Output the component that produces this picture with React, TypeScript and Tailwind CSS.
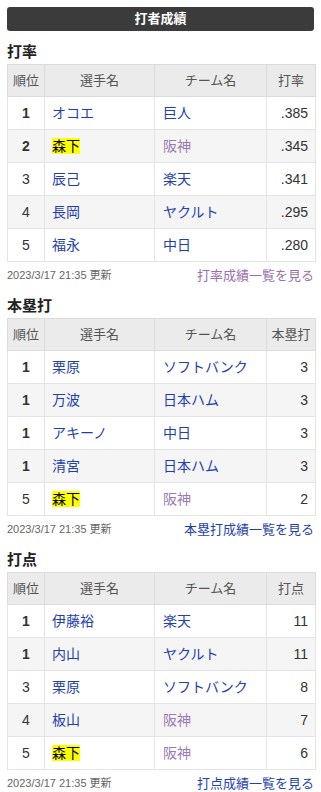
type Row = {
  rank: number;
  name: string;
  team: string;
  value: string;
  me?: boolean;
  visited?: boolean;
};

type Section = {
  title: string;
  link: string;
  linkVisited?: boolean;
  rows: Row[];
};

const sections: Section[] = [
  {
    title: "打率",
    link: "打率成績一覧を見る",
    linkVisited: true,
    rows: [
      { rank: 1, name: "オコエ", team: "巨人", value: ".385" },
      { rank: 2, name: "森下", team: "阪神", value: ".345", me: true, visited: true },
      { rank: 3, name: "辰己", team: "楽天", value: ".341" },
      { rank: 4, name: "長岡", team: "ヤクルト", value: ".295" },
      { rank: 5, name: "福永", team: "中日", value: ".280" },
    ],
  },
  {
    title: "本塁打",
    link: "本塁打成績一覧を見る",
    rows: [
      { rank: 1, name: "栗原", team: "ソフトバンク", value: "3" },
      { rank: 1, name: "万波", team: "日本ハム", value: "3" },
      { rank: 1, name: "アキーノ", team: "中日", value: "3" },
      { rank: 1, name: "清宮", team: "日本ハム", value: "3" },
      { rank: 5, name: "森下", team: "阪神", value: "2", me: true, visited: true },
    ],
  },
  {
    title: "打点",
    link: "打点成績一覧を見る",
    rows: [
      { rank: 1, name: "伊藤裕", team: "楽天", value: "11" },
      { rank: 1, name: "内山", team: "ヤクルト", value: "11" },
      { rank: 3, name: "栗原", team: "ソフトバンク", value: "8" },
      { rank: 4, name: "板山", team: "阪神", value: "7", visited: true },
      { rank: 5, name: "森下", team: "阪神", value: "6", me: true, visited: true },
    ],
  },
];

function StatTable({ section, first }: { section: Section; first: boolean }) {
  return (
    <div>
      <h2
        className={`${first ? "mt-[8px]" : "mt-[4px]"} h-[25px] leading-[25px] text-[15px] font-bold text-[#222]`}
      >
        {section.title}
      </h2>
      <table className="w-full table-fixed border-collapse border border-[#d6d6d6] text-[14px]">
        <colgroup>
          <col className="w-[37px]" />
          <col className="w-[110px]" />
          <col className="w-[112px]" />
          <col className="w-[49px]" />
        </colgroup>
        <thead>
          <tr className="h-[32px] bg-[#ebebeb] text-[13px] text-[#555]">
            <th className="border border-[#dcdcdc] font-normal">順位</th>
            <th className="border border-[#dcdcdc] font-normal">選手名</th>
            <th className="border border-[#dcdcdc] font-normal">チーム名</th>
            <th className="border border-[#dcdcdc] font-normal">{section.title}</th>
          </tr>
        </thead>
        <tbody>
          {section.rows.map((r, i) => (
            <tr key={i} className={`h-[33px] ${i % 2 === 1 ? "bg-[#f5f5f5]" : "bg-white"}`}>
              <td
                className={`border border-[#e4e4e4] text-center text-[#333] ${r.rank <= 2 ? "font-bold" : ""}`}
              >
                {r.rank}
              </td>
              <td className="border border-[#e4e4e4] pl-[7px]">
                {r.me ? (
                  <span className="bg-[#ffff00] text-black">{r.name}</span>
                ) : (
                  <span className="text-[#1f3fb0]">{r.name}</span>
                )}
              </td>
              <td
                className={`border border-[#e4e4e4] pl-[8px] ${r.visited ? "text-[#9a7bb0]" : "text-[#1f3fb0]"}`}
              >
                {r.team}
              </td>
              <td className="border border-[#e4e4e4] pr-[7px] text-right text-[#333]">{r.value}</td>
            </tr>
          ))}
        </tbody>
      </table>
      <div className="flex h-[27px] items-center justify-between">
        <span className="text-[11px] text-[#666]">2023/3/17 21:35 更新</span>
        <span
          className={`text-[13px] ${section.linkVisited ? "text-[#9a6fac]" : "text-[#1f3fb0]"}`}
        >
          {section.link}
        </span>
      </div>
    </div>
  );
}

export default function App() {
  return (
    <div
      className="min-h-screen bg-white px-[7px] pt-[7px]"
      style={{ fontFamily: '"Liberation Sans", "Noto Sans CJK JP", sans-serif' }}
    >
      <div className="flex h-6 items-center justify-center rounded-[3px] bg-[#3b3b3b] text-[13px] font-bold text-white">
        打者成績
      </div>
      {sections.map((s, i) => (
        <StatTable key={s.title} section={s} first={i === 0} />
      ))}
    </div>
  );
}
